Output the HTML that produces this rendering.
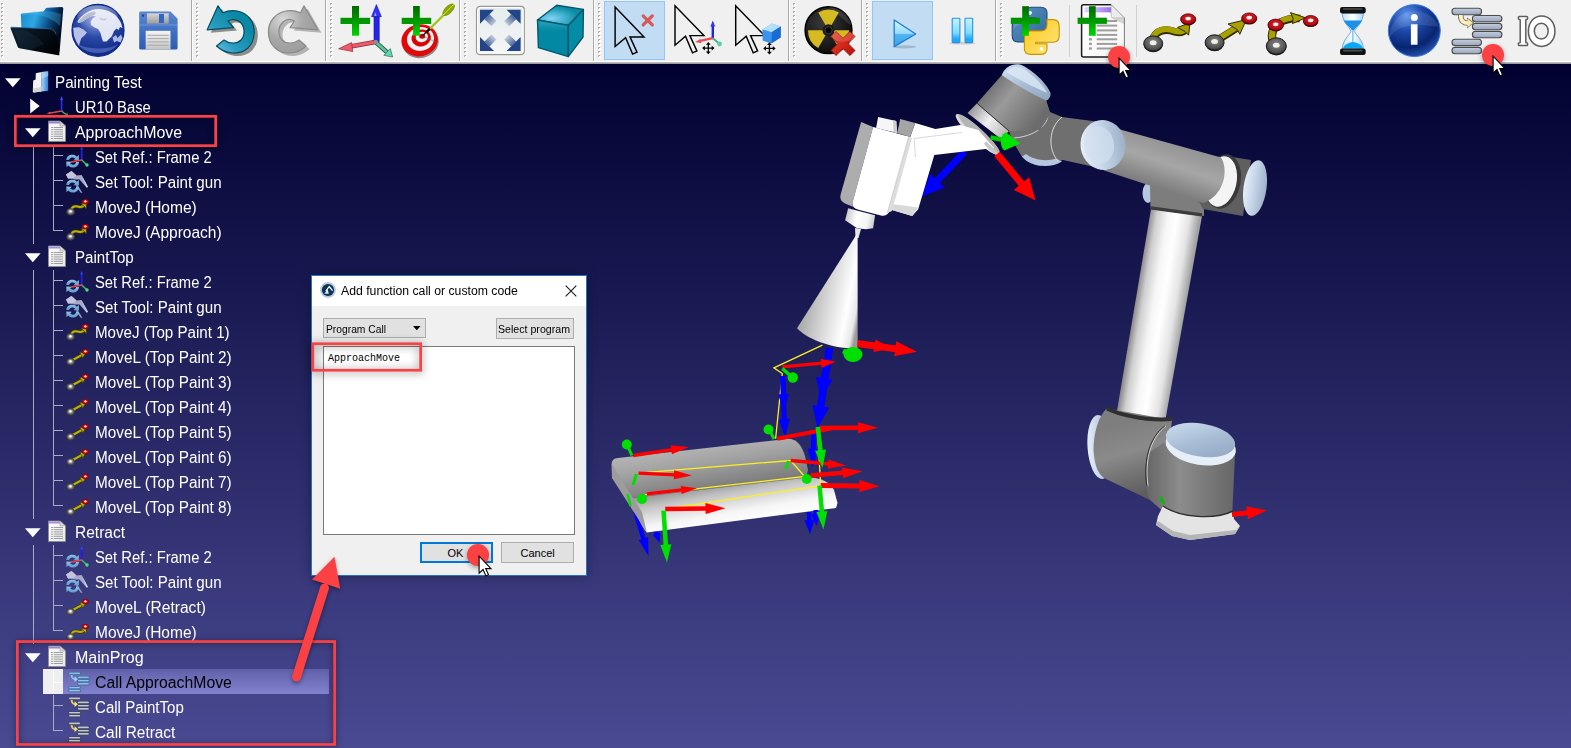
<!DOCTYPE html><html><head><meta charset="utf-8"><title>RoboDK</title><style>
*{box-sizing:border-box;margin:0;padding:0}
html,body{width:1571px;height:748px;overflow:hidden;background:#000032}
body{position:relative;font-family:"Liberation Sans",sans-serif;}
#bg{position:absolute;left:0;top:64px;width:1571px;height:684px;background:linear-gradient(#010131 0%,#4a4a93 100%)}
#tb{position:absolute;left:0;top:0;width:1571px;height:62px;background:#f0f0f0;border-bottom:1px solid #fff}
#tbline{position:absolute;left:0;top:62px;width:1571px;height:2px;background:linear-gradient(#c8c8c8,#8c8c94)}
.sep{position:absolute;top:0;width:2px;height:61px;border-left:1px solid #a8a8a8;border-right:1px solid #fff}
.sep2{position:absolute;top:5px;width:1px;height:52px;background:#d0d0d0}
.hdl{position:absolute;top:3px;width:3px;height:55px;background:repeating-linear-gradient(transparent 0,transparent 1px,#fff 1px,#fff 3px,transparent 3px,transparent 4px) 1px 0/2px 100% no-repeat,repeating-linear-gradient(#b0b0b0 0,#b0b0b0 2px,transparent 2px,transparent 4px) 0 0/2px 100% no-repeat}
.hl{position:absolute;top:1px;height:59px;background:#c2dcf3;border:1px solid #92c6f4}
.ic{position:absolute;overflow:visible}
.t{position:absolute;color:#fff;font-size:16px;line-height:25px;height:25px;white-space:pre;transform-origin:0 50%}
.ln{position:absolute;background:#a9a9c4}
.abs{position:absolute}
</style></head><body>
<div id="bg"></div>
<svg class="ic" style="left:0;top:0" width="1571" height="748" viewBox="0 0 1571 748">
<defs>
<linearGradient id="fa" gradientUnits="userSpaceOnUse" x1="1170" y1="135" x2="1150" y2="195"><stop offset="0" stop-color="#8e8e8e"/><stop offset=".45" stop-color="#a6a6a6"/><stop offset="1" stop-color="#6e6e6e"/></linearGradient>
<linearGradient id="ua" gradientUnits="userSpaceOnUse" x1="1131" y1="330" x2="1180" y2="338"><stop offset="0" stop-color="#8e8e8e"/><stop offset=".14" stop-color="#cfcfcf"/><stop offset=".36" stop-color="#f6f6f6"/><stop offset=".55" stop-color="#ffffff"/><stop offset=".8" stop-color="#e4e4e4"/><stop offset="1" stop-color="#a2a2a2"/></linearGradient>
<linearGradient id="cone" gradientUnits="userSpaceOnUse" x1="800" y1="300" x2="860" y2="312"><stop offset="0" stop-color="#a2a2a2"/><stop offset=".45" stop-color="#d8d8d8"/><stop offset=".78" stop-color="#ffffff"/><stop offset=".93" stop-color="#e8e8e8"/><stop offset="1" stop-color="#9a9a9a"/></linearGradient>
<linearGradient id="cap" x1="0" y1="0" x2="1" y2="1"><stop offset="0" stop-color="#cfe0f2"/><stop offset=".5" stop-color="#a9bed6"/><stop offset="1" stop-color="#8ea3bc"/></linearGradient>
<linearGradient id="cap2" x1="0" y1="0" x2="1" y2="0"><stop offset="0" stop-color="#e6effa"/><stop offset=".5" stop-color="#c2d2e6"/><stop offset="1" stop-color="#9cb0c8"/></linearGradient>
<linearGradient id="w3" gradientUnits="userSpaceOnUse" x1="985" y1="85" x2="1035" y2="125"><stop offset="0" stop-color="#6a6a6a"/><stop offset=".4" stop-color="#9a9a9a"/><stop offset="1" stop-color="#6c6c6c"/></linearGradient>
<linearGradient id="w3r" gradientUnits="userSpaceOnUse" x1="972" y1="108" x2="1005" y2="134"><stop offset="0" stop-color="#9a9a9a"/><stop offset=".5" stop-color="#f2f2f2"/><stop offset="1" stop-color="#b8b8b8"/></linearGradient>
<linearGradient id="sh" gradientUnits="userSpaceOnUse" x1="1100" y1="430" x2="1120" y2="500"><stop offset="0" stop-color="#7e7e7e"/><stop offset=".4" stop-color="#8a8a8a"/><stop offset="1" stop-color="#5e5e5e"/></linearGradient>
<linearGradient id="bs" gradientUnits="userSpaceOnUse" x1="1150" y1="480" x2="1235" y2="480"><stop offset="0" stop-color="#6a6a6a"/><stop offset=".35" stop-color="#8c8c8c"/><stop offset="1" stop-color="#666"/></linearGradient>
<linearGradient id="wpU" gradientUnits="userSpaceOnUse" x1="700" y1="440" x2="708" y2="490"><stop offset="0" stop-color="#b9b9b9"/><stop offset=".45" stop-color="#a2a2a2"/><stop offset="1" stop-color="#7c7c7c"/></linearGradient>
<linearGradient id="wpL" gradientUnits="userSpaceOnUse" x1="735" y1="478" x2="743" y2="525"><stop offset="0" stop-color="#8a8a8a"/><stop offset=".3" stop-color="#c4c4c4"/><stop offset=".7" stop-color="#f6f6f6"/><stop offset="1" stop-color="#ffffff"/></linearGradient>
<linearGradient id="gunS" gradientUnits="userSpaceOnUse" x1="850" y1="160" x2="905" y2="175"><stop offset="0" stop-color="#f4f4f4"/><stop offset=".3" stop-color="#ffffff"/><stop offset="1" stop-color="#ffffff"/></linearGradient>
<linearGradient id="noz" gradientUnits="userSpaceOnUse" x1="846" y1="215" x2="875" y2="222"><stop offset="0" stop-color="#c6c6c6"/><stop offset=".35" stop-color="#fff"/><stop offset=".75" stop-color="#f4f4f4"/><stop offset="1" stop-color="#c4c4c4"/></linearGradient>
</defs>
<path d="M964.5 152.0 L936.5 181.3" stroke="#0000ff" stroke-width="7" stroke-linecap="butt"/><path d="M922.0 196.5 L930.0 173.7 L944.4 187.5 Z" fill="#0000ff"/>
<path d="M1151 209 L1202 216 L1164.800 423 L1116.800 412 Z" fill="url(#ua)"/>
<ellipse cx="1148" cy="193" rx="5.500" ry="10" fill="#b5c8e0"/>
<path d="M1150 186 C1160 178 1180 176 1204 190 L1204 216 L1150.500 208.500 Z" fill="#7d7d7d"/>
<path d="M1150.800 206.300 L1202.200 213.300 L1201.800 216.500 L1150.400 209.500 Z" fill="#3c3c3c"/>
<path d="M1226 156 L1251 160 L1243 216 L1203 209 L1196 196 L1215 160 Z" fill="#5f5f5f"/>
<ellipse cx="1223" cy="181.500" rx="17.500" ry="27.500" transform="rotate(12 1223 181.500)" fill="#3a3a3a"/>
<ellipse cx="1221" cy="181.500" rx="15.500" ry="25.500" transform="rotate(12 1221 181.500)" fill="#f4f4f4"/>
<ellipse cx="1255" cy="188" rx="11.500" ry="28" transform="rotate(8 1255 188)" fill="url(#cap2)"/>
<path d="M1100 124 L1122 130 L1221 157.500 C1229 170 1224 196 1203 203 L1104 170.500 Z" fill="url(#fa)"/>
<path d="M1046 100 L1050 112 L1062 117 L1100 122 L1112 170 L1090 166 L1063 160 L1040 166 L1022 157 L1012 140 L1009 131 Z" fill="#6f6f6f"/>
<path d="M1022 156.500 C1030 167 1050 169 1062 161.500 L1056 158.500 C1046 162 1034 160 1026 154 Z" fill="#b4c6de"/>
<path d="M1062 117 C1048 128 1048 150 1058 161" fill="none" stroke="#d8d8d8" stroke-width="1"/>
<path d="M1047 108 C1052 120 1040 136 1014 138" fill="none" stroke="#d0d0d0" stroke-width="1"/>
<ellipse cx="1103" cy="145" rx="22.500" ry="25" transform="rotate(-8 1103 145)" fill="url(#cap2)"/>
<ellipse cx="1099" cy="145" rx="15" ry="19" transform="rotate(-8 1099 145)" fill="#d2e0f0" opacity=".7"/>
<path d="M1001.700 75.200 L1046 100 L1050 114 L1040 130 L1009 131 L977 103.300 Z" fill="url(#w3)"/>
<path d="M1001.700 75.200 C1004 68 1012 63 1020 64.500 C1030 68 1046 82 1050.500 93 C1051 97 1048 100 1046 100.500 C1030 93 1012 82 1001.700 75.200 Z" fill="url(#cap)"/>
<path d="M1006 72 C1012 66 1018 66 1024 69 C1034 76 1044 86 1047 93 C1032 86 1016 78 1006 72 Z" fill="#dce8f6" opacity=".8"/>
<path d="M977 103.300 L1009 131 L1001 139 L967.500 113 Z" fill="url(#w3r)"/>
<path d="M977 103.300 L1009 131" stroke="#2e2e2e" stroke-width="1"/>
<ellipse cx="977.700" cy="134.600" rx="29.500" ry="6" transform="rotate(42.800 977.700 134.600)" fill="#dcdcdc"/>
<ellipse cx="979" cy="133.600" rx="28" ry="4.400" transform="rotate(42.800 979 133.600)" fill="#b4b4b4"/>
<path d="M915.200 123 L935.300 129.100 L960.300 125.100 L978.300 130.100 L994 148 L934.300 155.100 L918.200 209.200 L912.200 215.900 L891.200 209.800 L910.200 137.100 Z" fill="#ffffff"/>
<path d="M892 204 L918.600 207.600 L912.200 215.900 L891.200 209.800 Z" fill="#d9d9d9"/>
<path d="M914 138.500 L962 132.500 M914 138.500 L915.500 157" fill="none" stroke="#cfcfcf" stroke-width=".8"/>
<path d="M986 141 C992 147 998 152 1000 156 C996 156 990 151 984 144 Z" fill="#c8c8c8"/>
<path d="M861.100 122 L873.100 127.100 L852.800 201.500 Q852 205 853.500 207 L845 203.500 Q839 200 840.500 195 Z" fill="#adadad"/>
<path d="M878.100 117 L896.200 121 L897.200 133 L876.100 128 Z" fill="#f6f6f6"/><path d="M893 120.300 L896.200 121 L897.200 133 L893.500 132.200 Z" fill="#cfcfcf"/>
<path d="M900.200 119 L915.200 123 L910.200 137.100 L897.200 133.100 Z" fill="#a4a4a4"/>
<path d="M905 136 L912 138 L892 211 L885 214 Z" fill="#dcdcdc"/>
<path d="M873.100 127.100 L910.200 137.100 L890 208.500 Q888.500 217 881 215.500 L858.500 209.800 Q851 207.500 852.800 201.500 Z" fill="url(#gunS)"/>
<path d="M908 137 L910.200 137.100 L889 212 L886.500 214 Z" fill="#d5d5d5"/>
<path d="M848.100 208.200 L875.100 215.300 L873.100 228.300 L866 229.300 L857.100 228.300 L845.100 220.300 Z" fill="url(#noz)"/>
<path d="M855 228 L861 229 L858.500 238 L855.500 238 Z" fill="#e4e4e4"/>
<path d="M856.200 235 L797 328.300 C806 338 830 349 857.600 348.500 L857.600 236 Z" fill="url(#cone)"/>
<path d="M997.0 154.0 L1022.1 184.3" stroke="#ff0000" stroke-width="7" stroke-linecap="butt"/><path d="M1035.5 200.5 L1013.8 189.9 L1029.2 177.2 Z" fill="#ff0000"/>
<path d="M990.500 137.500 L1004 140" stroke="#00cc00" stroke-width="4.500"/>
<path d="M1020.300 143.500 L1006 132.300 C1000 134 999 147 1004.500 150.600 Z" fill="#00e400"/>
<ellipse cx="1100" cy="447" rx="12.500" ry="32" transform="rotate(-4 1100 447)" fill="url(#cap2)"/>
<path d="M1107 408.500 C1098 416 1093 436 1093.700 452 C1094.500 466 1099 476 1106 479 L1150 500 L1166 470 L1172 420 Z" fill="url(#sh)"/>
<path d="M1107 406.500 C1122 414 1150 419 1172 417 L1171.600 421 C1150 423 1122 418 1106.400 410.500 Z" fill="#303030"/>
<path d="M1150 452 C1144 470 1145 490 1150 500 L1166 514 L1232 518 L1235 455 L1180 432 Z" fill="url(#bs)"/>
<path d="M1166 426 C1152 436 1144 458 1148 486" fill="none" stroke="#d6d6d6" stroke-width="1"/>
<path d="M1166 426 C1152 436 1144 458 1148 486" fill="none" stroke="#2c2c2c" stroke-width="1" transform="translate(-1.200 0)"/>
<ellipse cx="1200.800" cy="446.500" rx="35.500" ry="18.500" transform="rotate(9 1200.800 446.500)" fill="#e6eef8"/>
<ellipse cx="1200.500" cy="440" rx="35" ry="16.500" transform="rotate(9 1200.500 440)" fill="url(#cap)"/>
<path d="M1163 506 C1180 518 1215 520 1233 511 L1234 519 L1240 526 L1235 534 L1190 540 L1172 536 L1156 525 L1158 516 Z" fill="#e4e4e4"/>
<path d="M1163 506 C1180 518 1215 520 1233 511" fill="none" stroke="#2e2e2e" stroke-width="1.400"/>
<path d="M1156 525 L1172 536 L1190 540 L1235 534 L1240 526 L1236 530 L1190 535 L1173 531 L1158 521 Z" fill="#b5b5b5"/>
<path d="M1232.0 514.5 L1248.1 512.7" stroke="#ff0000" stroke-width="5" stroke-linecap="butt"/><path d="M1267.0 510.5 L1247.9 519.2 L1246.4 506.3 Z" fill="#ff0000"/>
<path d="M1160.500 496 L1164 503 L1161 502 Z" fill="#00c000" stroke="#00c000" stroke-width="1.500"/>
<path d="M635.0 510.0 L643.7 539.7" stroke="#0000ff" stroke-width="4.5" stroke-linecap="butt"/><path d="M648.5 556.0 L638.6 540.1 L648.2 537.3 Z" fill="#0000ff"/>
<path d="M655.0 530.0 L656.8 534.6" stroke="#0000ff" stroke-width="4" stroke-linecap="butt"/><path d="M660.0 543.0 L652.7 535.1 L660.1 532.2 Z" fill="#0000ff"/>
<path d="M611.700 464 C611.700 460 614 458.500 618 458 L789 438.700 C797 439 802 446 805 456 L808 470 L806 478 L631 498 L612 478 Z" fill="url(#wpU)"/>
<path d="M631.500 498 L808 477.500 C820 477 830 482 834 490 L837.500 503 L836 508 L646.800 532.400 C640 524 634 510 631.500 498 Z" fill="url(#wpL)"/>
<path d="M611.700 464 L612 478 L646.800 532.400 L642 512 L628 490 Z" fill="#9c9c9c"/>
<g stroke="#ffee20" stroke-width="1.300" fill="none"><path d="M822.400 345.100 L773.900 367.800 L782.300 373.500 L775.600 438.700"/><path d="M638.500 473.200 L790.600 460.500 L804.700 476.500 L645.200 494.600"/><path d="M665.200 509 L820.700 485.600 L817.400 427"/></g>
<path d="M829.5 348.0 L820.6 407.2" stroke="#0000ff" stroke-width="7.5" stroke-linecap="butt"/><path d="M817.5 428.0 L812.4 405.0 L829.2 407.5 Z" fill="#0000ff"/>
<path d="M825.5 372.0 L824.1 379.3" stroke="#0000ff" stroke-width="7" stroke-linecap="butt"/><path d="M820.5 398.0 L815.9 376.8 L832.6 380.0 Z" fill="#0000ff"/>
<path d="M782.5 376.0 L784.3 420.0" stroke="#0000ff" stroke-width="5" stroke-linecap="butt"/><path d="M785.0 437.0 L778.8 419.2 L789.8 418.8 Z" fill="#0000ff"/>
<path d="M783.0 376.0 L783.5 395.0" stroke="#0000ff" stroke-width="5" stroke-linecap="butt"/><path d="M784.0 412.0 L778.0 394.2 L789.0 393.9 Z" fill="#0000ff"/>
<path d="M814.0 430.0 L813.2 450.0" stroke="#0000ff" stroke-width="5" stroke-linecap="butt"/><path d="M812.5 467.0 L807.7 448.8 L818.7 449.2 Z" fill="#0000ff"/>
<path d="M809.0 512.0 L809.4 521.0" stroke="#0000ff" stroke-width="4.5" stroke-linecap="butt"/><path d="M810.0 534.0 L804.4 520.2 L814.4 519.8 Z" fill="#0000ff"/>
<path d="M815.5 510.0 L815.8 515.0" stroke="#0000ff" stroke-width="4.5" stroke-linecap="butt"/><path d="M816.5 526.0 L811.3 514.3 L820.2 513.7 Z" fill="#0000ff"/>
<path d="M857.5 343.5 L896.2 348.9" stroke="#ff0000" stroke-width="7" stroke-linecap="butt"/><path d="M917.0 351.8 L894.2 356.2 L896.2 341.3 Z" fill="#ff0000"/><path d="M891.9 348.3 L873.6 352.1 L875.4 339.6 Z" fill="#ff0000"/>
<path d="M782.3 366.8 L822.1 363.1" stroke="#ff0000" stroke-width="3.3" stroke-linecap="butt"/><path d="M836.0 361.8 L821.5 367.7 L820.6 358.7 Z" fill="#ff0000"/>
<path d="M777.300 438.700 L831 428.500" stroke="#ff0000" stroke-width="4"/>
<path d="M820.0 428.0 L859.0 427.8" stroke="#ff0000" stroke-width="4.5" stroke-linecap="butt"/><path d="M878.0 427.7 L858.0 433.3 L858.0 422.3 Z" fill="#ff0000"/>
<path d="M633.4 455.5 L672.2 449.6" stroke="#ff0000" stroke-width="3.3" stroke-linecap="butt"/><path d="M689.0 447.1 L671.9 454.2 L670.5 445.3 Z" fill="#ff0000"/>
<path d="M638.5 473.2 L675.0 474.8" stroke="#ff0000" stroke-width="3.3" stroke-linecap="butt"/><path d="M692.0 475.5 L673.8 479.2 L674.2 470.2 Z" fill="#ff0000"/>
<path d="M646.8 493.9 L682.1 489.9" stroke="#ff0000" stroke-width="3.3" stroke-linecap="butt"/><path d="M697.0 488.2 L681.6 494.0 L680.7 486.0 Z" fill="#ff0000"/>
<path d="M665.2 509.0 L706.5 508.5" stroke="#ff0000" stroke-width="4.5" stroke-linecap="butt"/><path d="M725.5 508.3 L705.6 514.0 L705.4 503.0 Z" fill="#ff0000"/>
<path d="M790.6 460.5 L829.1 464.0" stroke="#ff0000" stroke-width="3.3" stroke-linecap="butt"/><path d="M846.0 465.5 L827.7 468.4 L828.5 459.4 Z" fill="#ff0000"/>
<path d="M810.7 475.5 L843.6 472.8" stroke="#ff0000" stroke-width="4.5" stroke-linecap="butt"/><path d="M862.5 471.2 L843.0 478.3 L842.1 467.4 Z" fill="#ff0000"/>
<path d="M820.7 485.6 L860.5 486.0" stroke="#ff0000" stroke-width="5" stroke-linecap="butt"/><path d="M879.5 486.2 L859.4 492.0 L859.6 480.0 Z" fill="#ff0000"/>
<path d="M817.8 427.0 L820.6 451.1" stroke="#00e000" stroke-width="4.5" stroke-linecap="butt"/><path d="M822.6 468.0 L815.0 450.8 L826.0 449.5 Z" fill="#00e000"/>
<path d="M819.5 485.6 L822.0 512.6" stroke="#00e000" stroke-width="4.5" stroke-linecap="butt"/><path d="M823.5 529.5 L816.4 512.1 L827.3 511.1 Z" fill="#00e000"/>
<path d="M663.5 510.6 L665.9 545.5" stroke="#00e000" stroke-width="4.5" stroke-linecap="butt"/><path d="M667.0 562.5 L660.3 544.9 L671.3 544.2 Z" fill="#00e000"/>
<g fill="#00e000" stroke="#00e000"><path d="M626.800 443.700 L631.800 455.500" stroke-width="3"/><circle cx="626.800" cy="444.500" r="5" stroke="none"/><path d="M768.900 428.700 L774 439" stroke-width="3"/><circle cx="768.500" cy="429.500" r="5" stroke="none"/><path d="M782.300 368.500 L792 377" stroke-width="3.500"/><circle cx="792.800" cy="377.500" r="5.200" stroke="none"/><ellipse cx="853" cy="354.500" rx="9.500" ry="7.500" stroke="none"/><path d="M843 351 L850 354" stroke-width="5"/><circle cx="642" cy="499" r="5" stroke="none"/><circle cx="806.700" cy="479" r="5" stroke="none"/><path d="M636.500 474 L633 485" stroke-width="3"/><path d="M788.500 461 L785.500 469" stroke-width="3"/><path d="M627.500 494 L630.500 506" stroke-width="2.500"/></g>
</svg>
<svg width="0" height="0" style="position:absolute"><defs>
<linearGradient id="gDoc" x1="0" y1="0" x2="1" y2="1"><stop offset="0" stop-color="#fff"/><stop offset="1" stop-color="#e8e8e8"/></linearGradient>
<linearGradient id="gRef" x1="0" y1="0" x2="0" y2="1"><stop offset="0" stop-color="#8fc0e6"/><stop offset="1" stop-color="#5b9bd0"/></linearGradient>
<radialGradient id="gGr" cx=".48" cy=".42" r=".6"><stop offset="0" stop-color="#fff"/><stop offset=".22" stop-color="#e8e8e8"/><stop offset=".42" stop-color="#8a8a8a"/><stop offset="1" stop-color="#3a3a3a"/></radialGradient>
<radialGradient id="gRd" cx=".5" cy=".45" r=".6"><stop offset="0" stop-color="#fff"/><stop offset=".3" stop-color="#f0b0b0"/><stop offset=".45" stop-color="#d01010"/><stop offset="1" stop-color="#a00000"/></radialGradient>
<linearGradient id="gSt" x1="0" y1="0" x2="1" y2="0"><stop offset="0" stop-color="#a8d4f4"/><stop offset="1" stop-color="#2f7fdc"/></linearGradient>
<symbol id="sProg" viewBox="0 0 18 22" overflow="visible">
 <path d="M0.5 1 L12 1 L17.5 6 L17.5 21.5 L0.5 21.5 Z" fill="url(#gDoc)" stroke="#8c8c8c" stroke-width=".8"/>
 <path d="M1 1.4 L11.8 1.4 L13.5 3.6 L1 3.6 Z" fill="#a58ee0"/>
 <path d="M12 1 L12 6 L17.5 6 Z" fill="#d8d8d8" stroke="#9a9a9a" stroke-width=".5"/>
 <g stroke="#9c9c9c" stroke-width="1"><path d="M3 7.5H15M3 9.7H15M3 11.9H15M3 14.1H15M3 16.3H15M3 18.5H15"/></g>
 <path d="M5.3 6.5V19.5" stroke="#f4f4f4" stroke-width=".8"/>
</symbol>
<symbol id="sRefresh" viewBox="0 0 14 14" overflow="visible">
 <path d="M0.3 5.8 C0.5 1.8 4 0 7.2 0.4 C9.4 0.7 10.6 1.7 11.2 2.5 L13.2 0.6 L13.4 6.4 L7.6 6.2 L9.4 4.4 C8.4 3.4 6.6 3 5.2 3.6 C4 4.1 3.4 5 3.3 5.8 Z" fill="url(#gRef)"/>
 <path d="M13.4 8 C13.2 12 9.8 14 6.4 13.6 C4.2 13.3 3 12.3 2.4 11.5 L0.5 13.4 L0.3 7.5 L6 7.7 L4.3 9.5 C5.3 10.6 7 11 8.5 10.4 C9.7 9.9 10.3 9 10.4 8 Z" fill="url(#gRef)"/>
</symbol>
<symbol id="sMoveJ" viewBox="0 0 24 16" overflow="visible">
 <path d="M5 10.5 C6 5.5 10 6 13 6.8 C15.5 7.5 17 6.5 18.5 5" fill="none" stroke="#3e3a00" stroke-width="3.4" stroke-linecap="round"/>
 <path d="M5 10.5 C6 5.500 10 6 13 6.800 C15.5 7.5 17 6.5 18.5 5" fill="none" stroke="#b9b010" stroke-width="2.1" stroke-linecap="round"/>
 <path d="M15.2 3.6 L20.6 1.8 L20.2 8.8 L18.3 6.4 Z" fill="#b9b010" stroke="#3e3a00" stroke-width=".7" stroke-linejoin="round"/>
 <ellipse cx="4.6" cy="11.9" rx="3.9" ry="3.3" fill="url(#gGr)" stroke="#3c3c3c" stroke-width=".7"/>
 <ellipse cx="19.4" cy="1.7" rx="3.3" ry="2.4" fill="url(#gRd)" stroke="#800" stroke-width=".5"/>
</symbol>
<symbol id="sMoveL" viewBox="0 0 24 16" overflow="visible">
 <path d="M5 11 L16.5 4.600" fill="none" stroke="#3e3a00" stroke-width="3.4" stroke-linecap="round"/>
 <path d="M5 11 L16.5 4.6" fill="none" stroke="#b9b010" stroke-width="2.1" stroke-linecap="round"/>
 <path d="M13.6 2.6 L20.2 2.2 L16.6 8.2 L15.9 5.600 Z" fill="#b9b010" stroke="#3e3a00" stroke-width=".7" stroke-linejoin="round"/>
 <ellipse cx="4.6" cy="11.9" rx="3.9" ry="3.3" fill="url(#gGr)" stroke="#3c3c3c" stroke-width=".7"/>
 <ellipse cx="19.4" cy="1.7" rx="3.3" ry="2.4" fill="url(#gRd)" stroke="#800" stroke-width=".5"/>
</symbol>
<symbol id="sCallG" viewBox="0 0 22 20" overflow="visible"><rect x="0.3" y="0.2" width="12.6" height="2.700" rx="1.300" fill="#41464f"/><rect x="1.0" y="0.75" width="11.2" height="1.500" rx=".700" fill="#aeb6c6"/><rect x="1.3" y="0.75" width="10.6" height=".700" rx=".300" fill="#cdd3df"/><rect x="9.1" y="4.3" width="12.4" height="2.700" rx="1.300" fill="#41464f"/><rect x="9.799999999999999" y="4.85" width="11.0" height="1.500" rx=".700" fill="#aeb6c6"/><rect x="10.1" y="4.85" width="10.4" height=".700" rx=".300" fill="#cdd3df"/><rect x="9.1" y="7.5" width="12.4" height="2.700" rx="1.300" fill="#41464f"/><rect x="9.799999999999999" y="8.05" width="11.0" height="1.500" rx=".700" fill="#aeb6c6"/><rect x="10.1" y="8.05" width="10.4" height=".700" rx=".300" fill="#cdd3df"/><rect x="9.1" y="10.7" width="12.4" height="2.700" rx="1.300" fill="#41464f"/><rect x="9.799999999999999" y="11.25" width="11.0" height="1.500" rx=".700" fill="#aeb6c6"/><rect x="10.1" y="11.25" width="10.4" height=".700" rx=".300" fill="#cdd3df"/><rect x="0.3" y="14.4" width="12.6" height="2.700" rx="1.300" fill="#41464f"/><rect x="1.0" y="14.950000000000001" width="11.2" height="1.500" rx=".700" fill="#aeb6c6"/><rect x="1.3" y="14.950000000000001" width="10.6" height=".700" rx=".300" fill="#cdd3df"/><rect x="0.3" y="17.5" width="12.6" height="2.700" rx="1.300" fill="#41464f"/><rect x="1.0" y="18.05" width="11.2" height="1.500" rx=".700" fill="#aeb6c6"/><rect x="1.3" y="18.05" width="10.6" height=".700" rx=".300" fill="#cdd3df"/><path d="M3.600 3 C3.600 6.200 5.400 7.400 8 7.300" fill="none" stroke="#ecc850" stroke-width="1.900"/><path d="M6.600 4.300 L9.900 7.200 L6.500 9.900 Z" fill="#f8e27c"/></symbol>
<symbol id="sCallB" viewBox="0 0 22 20" overflow="visible"><rect x="0.3" y="0.2" width="12.6" height="2.700" rx="1.300" fill="#3a6c9e"/><rect x="1.0" y="0.75" width="11.2" height="1.500" rx=".700" fill="#76acd8"/><rect x="1.3" y="0.75" width="10.6" height=".700" rx=".300" fill="#9ccaea"/><rect x="9.1" y="4.3" width="12.4" height="2.700" rx="1.300" fill="#3a6c9e"/><rect x="9.799999999999999" y="4.85" width="11.0" height="1.500" rx=".700" fill="#76acd8"/><rect x="10.1" y="4.85" width="10.4" height=".700" rx=".300" fill="#9ccaea"/><rect x="9.1" y="7.5" width="12.4" height="2.700" rx="1.300" fill="#3a6c9e"/><rect x="9.799999999999999" y="8.05" width="11.0" height="1.500" rx=".700" fill="#76acd8"/><rect x="10.1" y="8.05" width="10.4" height=".700" rx=".300" fill="#9ccaea"/><rect x="9.1" y="10.7" width="12.4" height="2.700" rx="1.300" fill="#3a6c9e"/><rect x="9.799999999999999" y="11.25" width="11.0" height="1.500" rx=".700" fill="#76acd8"/><rect x="10.1" y="11.25" width="10.4" height=".700" rx=".300" fill="#9ccaea"/><rect x="0.3" y="14.4" width="12.6" height="2.700" rx="1.300" fill="#3a6c9e"/><rect x="1.0" y="14.950000000000001" width="11.2" height="1.500" rx=".700" fill="#76acd8"/><rect x="1.3" y="14.950000000000001" width="10.6" height=".700" rx=".300" fill="#9ccaea"/><rect x="0.3" y="17.5" width="12.6" height="2.700" rx="1.300" fill="#3a6c9e"/><rect x="1.0" y="18.05" width="11.2" height="1.500" rx=".700" fill="#76acd8"/><rect x="1.3" y="18.05" width="10.6" height=".700" rx=".300" fill="#9ccaea"/><path d="M3.600 3 C3.600 6.200 5.400 7.400 8 7.300" fill="none" stroke="#86c0e4" stroke-width="1.900"/><path d="M6.600 4.300 L9.900 7.200 L6.500 9.900 Z" fill="#a2d4f0"/></symbol>
</defs></svg>
<div class="abs" style="left:63px;top:669px;width:265.800px;height:25px;background:linear-gradient(#6060aa,#8282cf)"></div>
<div class="abs" style="left:43px;top:669px;width:20px;height:25px;background:#efefef"></div>
<div class="abs" style="left:52.500px;top:669px;width:1px;height:25px;background:#fafafa"></div><div class="abs" style="left:53px;top:681.5px;width:10px;height:1px;background:#fafafa"></div>
<div class="ln" style="left:52.5px;top:144.5px;width:1px;height:86.5px"></div>
<div class="ln" style="left:53px;top:155px;width:9.5px;height:1px"></div>
<div class="ln" style="left:53px;top:180px;width:9.5px;height:1px"></div>
<div class="ln" style="left:53px;top:205px;width:9.5px;height:1px"></div>
<div class="ln" style="left:53px;top:230px;width:9.5px;height:1px"></div>
<div class="ln" style="left:32.5px;top:144.5px;width:1px;height:99.5px"></div>
<div class="ln" style="left:52.5px;top:269.5px;width:1px;height:236.5px"></div>
<div class="ln" style="left:53px;top:280px;width:9.5px;height:1px"></div>
<div class="ln" style="left:53px;top:305px;width:9.5px;height:1px"></div>
<div class="ln" style="left:53px;top:330px;width:9.5px;height:1px"></div>
<div class="ln" style="left:53px;top:355px;width:9.5px;height:1px"></div>
<div class="ln" style="left:53px;top:380px;width:9.5px;height:1px"></div>
<div class="ln" style="left:53px;top:405px;width:9.5px;height:1px"></div>
<div class="ln" style="left:53px;top:430px;width:9.5px;height:1px"></div>
<div class="ln" style="left:53px;top:455px;width:9.5px;height:1px"></div>
<div class="ln" style="left:53px;top:480px;width:9.5px;height:1px"></div>
<div class="ln" style="left:53px;top:505px;width:9.5px;height:1px"></div>
<div class="ln" style="left:32.5px;top:269.5px;width:1px;height:249.5px"></div>
<div class="ln" style="left:52.5px;top:544.5px;width:1px;height:86.5px"></div>
<div class="ln" style="left:53px;top:555px;width:9.5px;height:1px"></div>
<div class="ln" style="left:53px;top:580px;width:9.5px;height:1px"></div>
<div class="ln" style="left:53px;top:605px;width:9.5px;height:1px"></div>
<div class="ln" style="left:53px;top:630px;width:9.5px;height:1px"></div>
<div class="ln" style="left:32.5px;top:544.5px;width:1px;height:99.5px"></div>
<div class="ln" style="left:52.5px;top:694.5px;width:1px;height:36.5px"></div>
<div class="ln" style="left:53px;top:705px;width:9.5px;height:1px"></div>
<div class="ln" style="left:53px;top:730px;width:9.5px;height:1px"></div>
<svg class="ic" style="left:5.2px;top:77.7px" width="16" height="10" viewBox="0 0 16 10"><path d="M0 0.300 L15.6 0.300 L7.800 9.300 Z" fill="#fff"/></svg>
<svg class="ic" style="left:32px;top:70px" width="18" height="24" viewBox="0 0 18 24"><path d="M1.2 10.500 L3.6 9.4 L3.8 3.2 L9.6 2 L9.6 21.5 L2 22.600 Q.6 22.500 .8 21 Z" fill="#f2f2f2"/><path d="M2 22.6 L9.6 21.5 L9.600 17 L1 18.5 Z" fill="#d4d4d4"/><path d="M9.6 2 L16.200 1.2 L16.2 20.800 L9.6 21.500 Z" fill="url(#gSt)"/><path d="M9.6 2 L16.2 1.2 L16.2 6 L9.6 9 Z" fill="#b8dcf6" opacity=".6"/></svg>
<div class="t" style="left:54.7px;top:70px;color:#fff;transform:scaleX(0.9504)">Painting Test</div>
<svg class="ic" style="left:29.7px;top:98px" width="10" height="16" viewBox="0 0 10 16"><path d="M0.200 0.400 L9.700 8 L0.200 15.400 Z" fill="#fff"/></svg>
<svg class="ic" style="left:46px;top:93px" width="24" height="24" viewBox="0 0 24 24"><path d="M15.600 18 L15.600 6" stroke="#2a2af6" stroke-width="1.700"/><path d="M15.600 3 L17 7 L14.200 7 Z" fill="#4a4aff"/><path d="M15.600 18 L3 20.200" stroke="#f04854" stroke-width="1.600"/><path d="M.5 20.600 L4.200 18.800 L4.600 21 Z" fill="#f05058"/><path d="M15.600 18 L19 20.800 L22 21.400" stroke="#40b870" stroke-width="1.500" fill="none"/></svg>
<div class="t" style="left:74.7px;top:95px;color:#fff;transform:scaleX(0.9263)">UR10 Base</div>
<svg class="ic" style="left:25.2px;top:127.69999999999999px" width="16" height="10" viewBox="0 0 16 10"><path d="M0 0.300 L15.6 0.300 L7.800 9.300 Z" fill="#fff"/></svg>
<svg class="ic" style="left:48.2px;top:120px" width="18" height="22"><use href="#sProg" width="18" height="22"/></svg>
<div class="t" style="left:74.7px;top:120px;color:#fff;transform:scaleX(0.9950)">ApproachMove</div>
<svg class="ic" style="left:65.8px;top:153.8px" width="13.6" height="14.2"><use href="#sRefresh" width="13.6" height="14.2"/></svg><svg class="ic" style="left:68px;top:146px" width="22" height="22" viewBox="0 0 22 22"><path d="M13.700 14 L13.700 3" stroke="#2020e8" stroke-width="1.800"/><path d="M13.7 0 L15.200 3.600 L12.2 3.600 Z" fill="#3838ff"/><path d="M13.7 14 L3.500 16" stroke="#f04048" stroke-width="1.700" stroke-linecap="round"/><path d="M13.7 14 L18.600 18.600" stroke="#38b868" stroke-width="1.500"/><circle cx="19" cy="19" r="1.700" fill="#48d888"/></svg>
<div class="t" style="left:94.7px;top:145px;color:#fff;transform:scaleX(0.9242)">Set Ref.: Frame 2</div>
<svg class="ic" style="left:65px;top:170px" width="24" height="24" viewBox="0 0 24 24"><path d="M1 4.5 L6.500 1 L11.500 5.500 L16.500 5 L23 17 L21.500 17.500 L14.500 9.500 L9 9.500 L8 8.500 L3 8.500 Z" fill="#a8a8cc"/><path d="M1 4.500 L6.5 1 L11.5 5.500 L8 8.500 L3 8.500 Z" fill="#c4c4de"/><path d="M16.5 5 L23 17 L21.5 17.5 Z" fill="#d0d0e8"/><path d="M12 14 L17.500 23 L15.500 22.500 L11 16 Z" fill="#9c9cc4"/></svg><svg class="ic" style="left:65.8px;top:178.7px" width="13.6" height="14.2"><use href="#sRefresh" width="13.6" height="14.2"/></svg>
<div class="t" style="left:94.7px;top:170px;color:#fff;transform:scaleX(0.9445)">Set Tool: Paint gun</div>
<svg class="ic" style="left:65.8px;top:199.8px" width="24" height="16"><use href="#sMoveJ" width="24" height="16"/></svg>
<div class="t" style="left:94.7px;top:195px;color:#fff;transform:scaleX(0.9693)">MoveJ (Home)</div>
<svg class="ic" style="left:65.8px;top:224.8px" width="24" height="16"><use href="#sMoveJ" width="24" height="16"/></svg>
<div class="t" style="left:94.7px;top:220px;color:#fff;transform:scaleX(0.9684)">MoveJ (Approach)</div>
<svg class="ic" style="left:25.2px;top:252.7px" width="16" height="10" viewBox="0 0 16 10"><path d="M0 0.300 L15.6 0.300 L7.800 9.300 Z" fill="#fff"/></svg>
<svg class="ic" style="left:48.2px;top:245px" width="18" height="22"><use href="#sProg" width="18" height="22"/></svg>
<div class="t" style="left:74.7px;top:245px;color:#fff;transform:scaleX(0.9426)">PaintTop</div>
<svg class="ic" style="left:65.8px;top:278.8px" width="13.6" height="14.2"><use href="#sRefresh" width="13.6" height="14.2"/></svg><svg class="ic" style="left:68px;top:271px" width="22" height="22" viewBox="0 0 22 22"><path d="M13.700 14 L13.700 3" stroke="#2020e8" stroke-width="1.800"/><path d="M13.7 0 L15.200 3.600 L12.2 3.600 Z" fill="#3838ff"/><path d="M13.7 14 L3.500 16" stroke="#f04048" stroke-width="1.700" stroke-linecap="round"/><path d="M13.7 14 L18.600 18.600" stroke="#38b868" stroke-width="1.500"/><circle cx="19" cy="19" r="1.700" fill="#48d888"/></svg>
<div class="t" style="left:94.7px;top:270px;color:#fff;transform:scaleX(0.9242)">Set Ref.: Frame 2</div>
<svg class="ic" style="left:65px;top:295px" width="24" height="24" viewBox="0 0 24 24"><path d="M1 4.5 L6.500 1 L11.500 5.500 L16.500 5 L23 17 L21.500 17.500 L14.500 9.500 L9 9.500 L8 8.500 L3 8.500 Z" fill="#a8a8cc"/><path d="M1 4.500 L6.5 1 L11.5 5.500 L8 8.500 L3 8.500 Z" fill="#c4c4de"/><path d="M16.5 5 L23 17 L21.5 17.5 Z" fill="#d0d0e8"/><path d="M12 14 L17.500 23 L15.500 22.500 L11 16 Z" fill="#9c9cc4"/></svg><svg class="ic" style="left:65.8px;top:303.7px" width="13.6" height="14.2"><use href="#sRefresh" width="13.6" height="14.2"/></svg>
<div class="t" style="left:94.7px;top:295px;color:#fff;transform:scaleX(0.9445)">Set Tool: Paint gun</div>
<svg class="ic" style="left:65.8px;top:324.8px" width="24" height="16"><use href="#sMoveJ" width="24" height="16"/></svg>
<div class="t" style="left:94.7px;top:320px;color:#fff;transform:scaleX(0.9460)">MoveJ (Top Paint 1)</div>
<svg class="ic" style="left:65.8px;top:349.8px" width="24" height="16"><use href="#sMoveL" width="24" height="16"/></svg>
<div class="t" style="left:94.7px;top:345px;color:#fff;transform:scaleX(0.9579)">MoveL (Top Paint 2)</div>
<svg class="ic" style="left:65.8px;top:374.8px" width="24" height="16"><use href="#sMoveL" width="24" height="16"/></svg>
<div class="t" style="left:94.7px;top:370px;color:#fff;transform:scaleX(0.9579)">MoveL (Top Paint 3)</div>
<svg class="ic" style="left:65.8px;top:399.8px" width="24" height="16"><use href="#sMoveL" width="24" height="16"/></svg>
<div class="t" style="left:94.7px;top:395px;color:#fff;transform:scaleX(0.9579)">MoveL (Top Paint 4)</div>
<svg class="ic" style="left:65.8px;top:424.8px" width="24" height="16"><use href="#sMoveL" width="24" height="16"/></svg>
<div class="t" style="left:94.7px;top:420px;color:#fff;transform:scaleX(0.9579)">MoveL (Top Paint 5)</div>
<svg class="ic" style="left:65.8px;top:449.8px" width="24" height="16"><use href="#sMoveL" width="24" height="16"/></svg>
<div class="t" style="left:94.7px;top:445px;color:#fff;transform:scaleX(0.9579)">MoveL (Top Paint 6)</div>
<svg class="ic" style="left:65.8px;top:474.8px" width="24" height="16"><use href="#sMoveL" width="24" height="16"/></svg>
<div class="t" style="left:94.7px;top:470px;color:#fff;transform:scaleX(0.9579)">MoveL (Top Paint 7)</div>
<svg class="ic" style="left:65.8px;top:499.8px" width="24" height="16"><use href="#sMoveL" width="24" height="16"/></svg>
<div class="t" style="left:94.7px;top:495px;color:#fff;transform:scaleX(0.9579)">MoveL (Top Paint 8)</div>
<svg class="ic" style="left:25.2px;top:527.7px" width="16" height="10" viewBox="0 0 16 10"><path d="M0 0.300 L15.6 0.300 L7.800 9.300 Z" fill="#fff"/></svg>
<svg class="ic" style="left:48.2px;top:520px" width="18" height="22"><use href="#sProg" width="18" height="22"/></svg>
<div class="t" style="left:74.7px;top:520px;color:#fff;transform:scaleX(0.9712)">Retract</div>
<svg class="ic" style="left:65.8px;top:553.8px" width="13.6" height="14.2"><use href="#sRefresh" width="13.6" height="14.2"/></svg><svg class="ic" style="left:68px;top:546px" width="22" height="22" viewBox="0 0 22 22"><path d="M13.700 14 L13.700 3" stroke="#2020e8" stroke-width="1.800"/><path d="M13.7 0 L15.200 3.600 L12.2 3.600 Z" fill="#3838ff"/><path d="M13.7 14 L3.500 16" stroke="#f04048" stroke-width="1.700" stroke-linecap="round"/><path d="M13.7 14 L18.600 18.600" stroke="#38b868" stroke-width="1.500"/><circle cx="19" cy="19" r="1.700" fill="#48d888"/></svg>
<div class="t" style="left:94.7px;top:545px;color:#fff;transform:scaleX(0.9242)">Set Ref.: Frame 2</div>
<svg class="ic" style="left:65px;top:570px" width="24" height="24" viewBox="0 0 24 24"><path d="M1 4.5 L6.500 1 L11.500 5.500 L16.500 5 L23 17 L21.500 17.500 L14.500 9.500 L9 9.500 L8 8.500 L3 8.500 Z" fill="#a8a8cc"/><path d="M1 4.500 L6.5 1 L11.5 5.500 L8 8.500 L3 8.500 Z" fill="#c4c4de"/><path d="M16.5 5 L23 17 L21.5 17.5 Z" fill="#d0d0e8"/><path d="M12 14 L17.500 23 L15.500 22.500 L11 16 Z" fill="#9c9cc4"/></svg><svg class="ic" style="left:65.8px;top:578.7px" width="13.6" height="14.2"><use href="#sRefresh" width="13.6" height="14.2"/></svg>
<div class="t" style="left:94.7px;top:570px;color:#fff;transform:scaleX(0.9445)">Set Tool: Paint gun</div>
<svg class="ic" style="left:65.8px;top:599.8px" width="24" height="16"><use href="#sMoveL" width="24" height="16"/></svg>
<div class="t" style="left:94.7px;top:595px;color:#fff;transform:scaleX(0.9719)">MoveL (Retract)</div>
<svg class="ic" style="left:65.8px;top:624.8px" width="24" height="16"><use href="#sMoveJ" width="24" height="16"/></svg>
<div class="t" style="left:94.7px;top:620px;color:#fff;transform:scaleX(0.9693)">MoveJ (Home)</div>
<svg class="ic" style="left:25.2px;top:652.7px" width="16" height="10" viewBox="0 0 16 10"><path d="M0 0.300 L15.6 0.300 L7.800 9.300 Z" fill="#fff"/></svg>
<svg class="ic" style="left:48.2px;top:645px" width="18" height="22"><use href="#sProg" width="18" height="22"/></svg>
<div class="t" style="left:74.7px;top:645px;color:#fff;transform:scaleX(1.0018)">MainProg</div>
<svg class="ic" style="left:67.8px;top:671.8px" width="22" height="20"><use href="#sCallB" width="22" height="20"/></svg>
<div class="t" style="left:94.7px;top:670px;color:#000;transform:scaleX(0.9867)">Call ApproachMove</div>
<svg class="ic" style="left:67.8px;top:696.8px" width="22" height="20"><use href="#sCallG" width="22" height="20"/></svg>
<div class="t" style="left:94.7px;top:695px;color:#fff;transform:scaleX(0.9418)">Call PaintTop</div>
<svg class="ic" style="left:67.8px;top:721.8px" width="22" height="20"><use href="#sCallG" width="22" height="20"/></svg>
<div class="t" style="left:94.7px;top:720px;color:#fff;transform:scaleX(0.9607)">Call Retract</div>
<div id="tb"></div><div id="tbline"></div>
<div class="sep" style="left:191px"></div>
<div class="sep" style="left:325px"></div>
<div class="sep" style="left:459px"></div>
<div class="sep" style="left:593px"></div>
<div class="sep" style="left:788px"></div>
<div class="sep" style="left:861px"></div>
<div class="sep" style="left:995px"></div>
<div class="hdl" style="left:1px"></div>
<div class="hdl" style="left:196px"></div>
<div class="hdl" style="left:330px"></div>
<div class="hdl" style="left:464px"></div>
<div class="hdl" style="left:598px"></div>
<div class="hdl" style="left:793px"></div>
<div class="hdl" style="left:866px"></div>
<div class="hdl" style="left:1000px"></div>
<div class="sep2" style="left:1069px"></div>
<div class="sep2" style="left:1136px"></div>
<div class="hl" style="left:604px;width:61px"></div>
<div class="hl" style="left:872px;width:61px"></div><svg class="ic" style="left:0;top:0" width="1571" height="70" viewBox="0 0 1571 70"><defs>
<linearGradient id="tPlus" x1="0" y1="0" x2="0" y2="1"><stop offset="0" stop-color="#006a00"/><stop offset=".45" stop-color="#009400"/><stop offset="1" stop-color="#00d400"/></linearGradient>
<linearGradient id="tPlusH" x1="0" y1="0" x2="0" y2="1"><stop offset="0" stop-color="#009000"/><stop offset="1" stop-color="#009c00"/></linearGradient>
<linearGradient id="tFoldB" x1="0" y1="0" x2="1" y2=".35"><stop offset="0" stop-color="#1a86cc"/><stop offset=".38" stop-color="#2ea8e4"/><stop offset=".62" stop-color="#12609e"/><stop offset=".85" stop-color="#062448"/><stop offset="1" stop-color="#020c1c"/></linearGradient>
<linearGradient id="tFoldF" x1="0" y1="0" x2="1" y2=".6"><stop offset="0" stop-color="#0e2436"/><stop offset=".3" stop-color="#0a1826"/><stop offset="1" stop-color="#000206"/></linearGradient>
<radialGradient id="tGlobe" cx=".45" cy=".3" r=".75"><stop offset="0" stop-color="#8ea2e2"/><stop offset=".45" stop-color="#2a48a6"/><stop offset="1" stop-color="#0c2682"/></radialGradient>
<linearGradient id="tGlobeG" x1="0" y1="0" x2="0" y2="1"><stop offset="0" stop-color="#fff" stop-opacity=".85"/><stop offset="1" stop-color="#fff" stop-opacity=".05"/></linearGradient>
<linearGradient id="tSave" x1="0" y1="0" x2="0" y2="1"><stop offset="0" stop-color="#5a86d2"/><stop offset="1" stop-color="#2c5cb4"/></linearGradient>
<linearGradient id="tMetal" x1="0" y1="0" x2="0" y2="1"><stop offset="0" stop-color="#d6d6d6"/><stop offset="1" stop-color="#9c9c9c"/></linearGradient>
<linearGradient id="tLabel" x1="0" y1="0" x2="0" y2="1"><stop offset="0" stop-color="#f4f4f4"/><stop offset="1" stop-color="#c4c4c4"/></linearGradient>
<linearGradient id="tUndo" x1="0" y1="1" x2="1" y2="0"><stop offset="0" stop-color="#7fd4f6"/><stop offset=".35" stop-color="#2a9cc0"/><stop offset=".7" stop-color="#0a88a4"/><stop offset="1" stop-color="#0a88a4"/></linearGradient>
<radialGradient id="tRedo" cx=".3" cy=".3" r=".8"><stop offset="0" stop-color="#d8d8d8"/><stop offset=".5" stop-color="#a8a8a8"/><stop offset="1" stop-color="#9a9a9a"/></radialGradient>
<linearGradient id="tFit" x1="0" y1="0" x2="0" y2="1"><stop offset="0" stop-color="#e4ecec"/><stop offset="1" stop-color="#f6f6f6"/></linearGradient>
<radialGradient id="tCubeT" cx=".3" cy=".65" r=".6"><stop offset="0" stop-color="#7fd6f8"/><stop offset="1" stop-color="#0a8ca6"/></radialGradient>
<linearGradient id="tCubeF" x1="0" y1="0" x2="0" y2="1"><stop offset="0" stop-color="#2aa2bc"/><stop offset=".3" stop-color="#0288a2"/><stop offset="1" stop-color="#0288a2"/></linearGradient>
<linearGradient id="tPlay" x1="0" y1="0" x2="0" y2="1"><stop offset="0" stop-color="#d4f6ff"/><stop offset=".5" stop-color="#9adcfa"/><stop offset=".55" stop-color="#52b4ee"/><stop offset="1" stop-color="#3aa4e8"/></linearGradient>
<linearGradient id="tPause" x1="0" y1="0" x2="0" y2="1"><stop offset="0" stop-color="#c8f4ff"/><stop offset=".6" stop-color="#7adcfc"/><stop offset=".85" stop-color="#22a8f4"/><stop offset="1" stop-color="#22a8f4"/></linearGradient>
<linearGradient id="tRX" x1="0" y1="0" x2="1" y2="1"><stop offset="0" stop-color="#e84838"/><stop offset=".5" stop-color="#d42a1c"/><stop offset="1" stop-color="#b01008"/></linearGradient>
<radialGradient id="tRad" cx=".4" cy=".35" r=".7"><stop offset="0" stop-color="#3a3a3a"/><stop offset="1" stop-color="#0a0a0a"/></radialGradient>
<linearGradient id="tPyB" x1="0" y1="0" x2="1" y2="1"><stop offset="0" stop-color="#5a92c8"/><stop offset="1" stop-color="#306898"/></linearGradient>
<linearGradient id="tPyY" x1="0" y1="0" x2="1" y2="1"><stop offset="0" stop-color="#ffe680"/><stop offset="1" stop-color="#ffc818"/></linearGradient>
<linearGradient id="tPurp" x1="0" y1="0" x2="1" y2="0"><stop offset="0" stop-color="#e8dcff"/><stop offset="1" stop-color="#9a70f0"/></linearGradient>
<linearGradient id="tDoc" x1="0" y1="0" x2="1" y2="1"><stop offset="0" stop-color="#ffffff"/><stop offset=".8" stop-color="#f8f8f8"/><stop offset="1" stop-color="#d8d8d8"/></linearGradient>
<radialGradient id="tGD" cx=".5" cy=".4" r=".6"><stop offset="0" stop-color="#8c8c8c"/><stop offset=".6" stop-color="#5e5e5e"/><stop offset="1" stop-color="#3c3c3c"/></radialGradient>
<radialGradient id="tRD" cx=".5" cy=".4" r=".6"><stop offset="0" stop-color="#e02828"/><stop offset=".7" stop-color="#b80c14"/><stop offset="1" stop-color="#90040c"/></radialGradient>
<radialGradient id="tInfo" cx=".35" cy=".2" r=".9"><stop offset="0" stop-color="#5c94ee"/><stop offset=".35" stop-color="#1c48a8"/><stop offset=".7" stop-color="#082470"/><stop offset="1" stop-color="#3060c0"/></radialGradient>
<linearGradient id="tGlass" x1="0" y1="0" x2="1" y2="0"><stop offset="0" stop-color="#bfe4fa"/><stop offset=".5" stop-color="#ffffff"/><stop offset="1" stop-color="#a8d8f6"/></linearGradient>
<linearGradient id="tBar" x1="0" y1="0" x2="0" y2="1"><stop offset="0" stop-color="#c4cede"/><stop offset="1" stop-color="#98a6bc"/></linearGradient>
<linearGradient id="tBlueCube" x1="0" y1="0" x2="1" y2="1"><stop offset="0" stop-color="#9cd4fc"/><stop offset=".5" stop-color="#3a94ec"/><stop offset="1" stop-color="#1060c8"/></linearGradient>
<linearGradient id="tArrFade" gradientUnits="objectBoundingBox" x1="0" y1="0" x2="1" y2="1"><stop offset="0" stop-color="#224488"/><stop offset="1" stop-color="#224488" stop-opacity="0"/></linearGradient>
</defs><path d="M20.800 14.600 Q21 13.600 22.200 13.500 L43.500 11.600 L45.600 8.600 Q46.200 7.800 47.400 7.700 L61.800 6.900 Q63.400 6.900 63.300 8.600 L59.600 52 L22 40 Z" fill="url(#tFoldB)"/>
<path d="M22 16 C34 12 50 16 60 26 L61 14 C50 10 36 10 22.500 14 Z" fill="#47c0f2" opacity=".3"/>
<path d="M11 27.200 L49.500 28.800 C53 29 55 31.500 56 34 C58 39 59.500 47 59.400 54.500 Q59.300 55.600 58 55.300 L19.500 48.300 Q18 48 17.600 46.600 L10.600 28.400 Q10.300 27.200 11 27.200 Z" fill="url(#tFoldF)"/>
<path d="M11 27.200 L49.500 28.800 C53 29 55 31.500 56 34" fill="none" stroke="#2a6a9a" stroke-width=".8"/>
<path d="M14 30 C24 28 36 34 44 44 L30 50 L19.500 48 Z" fill="#2a5068" opacity=".18"/>
<circle cx="98" cy="30.300" r="26" fill="url(#tGlobe)" stroke="#0a2a8a" stroke-width="1.200"/>
<path d="M77.500 21.500 C82 14 90 9.500 98 9 C108 9 117 14 121 23 L122.500 28 L120 27 L118.500 30 L116.500 28.500 L114 31 L112 36 L109 39 L106.500 41.500 L103 41.500 L101.500 37 L100.500 33 L98 29 L94.500 27.500 L91 25 L90.500 21.500 L93 18 L96 16.500 L92 16 L87 18.500 L82 22 L78 23 Z" fill="#e2e6f4"/>
<path d="M78 22.500 C82 16 88 12.500 94 11.500 C97 12 96 15 92 16 L87 18.500 L82 22 Z" fill="#a8adc4"/>
<path d="M73.200 27.800 L79 27.200 L83.500 29.500 L87 32.500 L84.500 35.500 L81.500 38 L80 42 L79 46 L76.500 42 L74 36 Z" fill="#b9c1e8"/>
<path d="M112.500 37.500 L116 35 L117.500 38 L121 34.500 L122.500 38 L120.500 42.500 L117 41 L114 42.500 Z" fill="#aab6e6"/>
<path d="M99.500 17.500 L103.500 19 L107 18 L105 20.500 L100.500 19.500 Z" fill="#9aa2c4" opacity=".7"/>
<ellipse cx="97.500" cy="17" rx="20" ry="11.500" fill="url(#tGlobeG)" opacity=".4"/>
<path d="M78 44 C86 56 110 56 118 44 C110 50 88 50 78 44 Z" fill="#7c94e0" opacity=".45"/>
<path d="M140.500 11.600 L170.500 11.600 L177.600 18.800 L177.600 48 Q177.600 49.500 176 49.500 L140.500 49.500 Q139.200 49.500 139.200 48 L139.200 13 Q139.200 11.600 140.500 11.600 Z" fill="url(#tSave)"/>
<rect x="147" y="13.300" width="21.700" height="10.400" fill="url(#tMetal)"/><rect x="159" y="14" width="5" height="9" fill="#3468c0"/>
<rect x="142" y="14.500" width="2" height="2.200" fill="#23458c"/>
<path d="M139.200 25 H177.600" stroke="#7ea2e2" stroke-width=".8"/>
<rect x="145.700" y="30.800" width="24.800" height="18.700" fill="url(#tLabel)"/>
<path d="M147.500 35.300 H168.700 M147.500 38.600 H168.700 M147.500 41.900 H168.700 M147.500 45.200 H168.700" stroke="#a8a8a8" stroke-width="1"/>
<path d="M207.200 29.800 L218 5.800 L222.800 12.800 C232 8.600 243 10.400 249.500 18 C256 26 256 40 248 48 C240 55 226 55 216.500 46 L224 40 C230 44.500 237 44 241 40 C245.500 35 245 26.500 240 22 C236.500 19 231 19 228 21 L233.500 27.600 Z" transform="translate(3.600 3)" fill="#8c8c8c"/>
<path d="M207.200 29.800 L218 5.800 L222.800 12.800 C232 8.600 243 10.400 249.500 18 C256 26 256 40 248 48 C240 55 226 55 216.500 46 L224 40 C230 44.500 237 44 241 40 C245.500 35 245 26.500 240 22 C236.500 19 231 19 228 21 L233.500 27.600 Z" fill="url(#tUndo)" stroke="#064c5e" stroke-width="1.200" stroke-linejoin="round"/>
<path d="M317.800 29.800 L304 5.800 L300.500 12.800 C291 8.600 280 10.400 273.500 18 C266.500 26 266.500 40 275 48 C283 55 297 55 306 46 L299 40 C293 44.500 286 44 282 40 C277.500 35 278 26.500 283 22 C286.500 19 291 19 294.500 21 L290 27.600 Z" transform="translate(3.600 3)" fill="#b4b4b4"/>
<path d="M317.800 29.800 L304 5.800 L300.500 12.800 C291 8.600 280 10.400 273.500 18 C266.500 26 266.500 40 275 48 C283 55 297 55 306 46 L299 40 C293 44.500 286 44 282 40 C277.500 35 278 26.500 283 22 C286.500 19 291 19 294.500 21 L290 27.600 Z" fill="url(#tRedo)" stroke="#8a8a8a" stroke-width="1.200" stroke-linejoin="round"/>
<path d="M375.300 42 L349 46.700" stroke="#7a3038" stroke-width="4.600"/><path d="M375.300 42 L349 46.700" stroke="#f05a68" stroke-width="3.300"/>
<path d="M338.600 48.800 L351.600 42.600 L352.800 51.600 Z" fill="#f05a68" stroke="#8a3038" stroke-width=".7"/>
<path d="M375.500 42 L389 54" stroke="#2c5a4c" stroke-width="4.400"/><path d="M375.500 42 L389 54" stroke="#5cc49c" stroke-width="2.800"/>
<path d="M392.600 57 L383.800 55.300 L390.300 48.600 Z" fill="#66d8ac" stroke="#2c6a56" stroke-width=".7"/>
<rect x="374" y="15" width="5.200" height="26.500" fill="#2424ee" stroke="#1a1a90" stroke-width=".6"/>
<path d="M376.400 4.600 L381.400 16.700 L371.500 16.700 Z" fill="#3030ff" stroke="#1a1a90" stroke-width=".6"/><path d="M375.200 12 L376.500 16 L374.400 16 Z" fill="#b0b0ff"/>
<circle cx="375.800" cy="42" r="2.300" fill="#8c8c8c"/>
<rect x="340.5" y="17.8" width="29.600000000000023" height="6.199999999999999" fill="url(#tPlusH)"/><rect x="352" y="6" width="7" height="29.700000000000003" fill="url(#tPlus)"/>
<ellipse cx="420.500" cy="42.500" rx="18.300" ry="15.500" transform="rotate(-12 420.500 42.500)" fill="#8c8c8c"/>
<ellipse cx="419.600" cy="40.300" rx="18.300" ry="16" transform="rotate(-12 419.600 40.300)" fill="#e00808"/>
<ellipse cx="420.500" cy="39" rx="13.600" ry="11.800" transform="rotate(-12 420.500 39)" fill="#f2f2f2"/>
<ellipse cx="421.200" cy="38" rx="9.800" ry="8.400" transform="rotate(-12 421.200 38)" fill="#d80404"/>
<ellipse cx="421.800" cy="37" rx="6.200" ry="5.200" transform="rotate(-12 421.800 37)" fill="#f4f4f4"/>
<ellipse cx="422.200" cy="36.200" rx="3" ry="2.500" fill="#cc0404"/>
<path d="M423 36 L436 42" stroke="#555" stroke-width="1.500" opacity=".35"/>
<path d="M422.400 36 L427.500 31" stroke="#222" stroke-width="1.600"/><path d="M426 32.500 L430 28.600" stroke="#111" stroke-width="2.600"/>
<path d="M430 28.600 L444 14.600" stroke="#a4c41c" stroke-width="2.200"/>
<ellipse cx="448.600" cy="9.800" rx="8" ry="3.900" transform="rotate(-45 448.600 9.800)" fill="#8aa408"/><path d="M443 15.400 L454 4.200" stroke="#dce860" stroke-width="1"/>
<rect x="401.7" y="17.8" width="29.5" height="6.199999999999999" fill="url(#tPlusH)"/><rect x="413.1" y="6" width="6.699999999999989" height="29.700000000000003" fill="url(#tPlus)"/>
<rect x="477.500" y="8.400" width="46" height="47.400" rx="3.500" fill="#000" opacity=".12"/>
<rect x="476.500" y="6.400" width="47.800" height="48" rx="3.500" fill="url(#tFit)" stroke="#98988e" stroke-width="1.200"/>
<rect x="477.700" y="7.600" width="45.400" height="45.600" rx="2.600" fill="none" stroke="#fff" stroke-width="1"/>
<g transform="translate(480 9.8) scale(1 1)"><path d="M0 0 L14 0 L0 14 Z" fill="#224488"/><path d="M4.500 9.500 L9.500 4.500 L16.500 11.500 L11.500 16.500 Z" fill="url(#tArrFade)"/></g>
<g transform="translate(520.6 9.8) scale(-1 1)"><path d="M0 0 L14 0 L0 14 Z" fill="#224488"/><path d="M4.500 9.500 L9.500 4.500 L16.500 11.500 L11.500 16.500 Z" fill="url(#tArrFade)"/></g>
<g transform="translate(480 51) scale(1 -1)"><path d="M0 0 L14 0 L0 14 Z" fill="#224488"/><path d="M4.500 9.500 L9.500 4.500 L16.500 11.500 L11.500 16.500 Z" fill="url(#tArrFade)"/></g>
<g transform="translate(520.6 51) scale(-1 -1)"><path d="M0 0 L14 0 L0 14 Z" fill="#224488"/><path d="M4.500 9.500 L9.500 4.500 L16.500 11.500 L11.500 16.500 Z" fill="url(#tArrFade)"/></g>
<path d="M537.500 20 L556.700 5.300 L583.400 9.400 L568.300 25.400 Z" fill="url(#tCubeT)" stroke="#04566a" stroke-width="1.400" stroke-linejoin="round"/>
<path d="M537.500 20 L568.300 25.400 L568.300 56.600 L538.400 47.700 Z" fill="url(#tCubeF)" stroke="#04566a" stroke-width="1.400" stroke-linejoin="round"/>
<path d="M568.300 25.400 L583.400 9.400 L583 37 L568.300 56.600 Z" fill="#048ca6" stroke="#04566a" stroke-width="1.400" stroke-linejoin="round"/><path d="M615.1 7.0 L615.1 46.5 L625.6 37.6 L632.6 54.1 L637.0 52.2 L630.0 36.9 L644.0 36.9 Z" fill="none" stroke="#000" stroke-width="1.450" stroke-linejoin="miter"/>
<path d="M643.200 15.900 L652.300 24.900 M652.300 15.900 L643.200 24.900" stroke="#d45a5a" stroke-width="3.300" stroke-linecap="round"/>
<path d="M675.0 5.7 L675.0 45.2 L685.5 36.3 L692.5 52.8 L696.9 50.9 L689.9 35.6 L703.9 35.6 Z" fill="none" stroke="#000" stroke-width="1.450" stroke-linejoin="miter"/>
<path d="M712.800 38 L712.800 25" stroke="#2222f0" stroke-width="2.400"/><path d="M712.800 20.500 L715.200 26.500 L710.400 26.500 Z" fill="#3434ff"/>
<path d="M712.800 38.200 L699 41.200" stroke="#ee4a58" stroke-width="2.400"/><path d="M695 42 L700.500 39 L701.400 43.200 Z" fill="#ee4a58"/>
<path d="M712.800 38.200 L718.500 43" stroke="#48b088" stroke-width="2"/><circle cx="719.500" cy="44" r="2.400" fill="#5cd0a0"/>
<path d="M704.0999999999999 48.1 H712.5 M708.3 43.9 V52.300000000000004" stroke="#000" stroke-width="1.300"/><path d="M714.5 48.1 L711.6999999999999 50.5 L711.6999999999999 45.7 Z" fill="#000"/><path d="M702.0999999999999 48.1 L704.9 45.7 L704.9 50.5 Z" fill="#000"/><path d="M708.3 54.300000000000004 L705.9 51.5 L710.6999999999999 51.5 Z" fill="#000"/><path d="M708.3 41.9 L710.6999999999999 44.7 L705.9 44.7 Z" fill="#000"/>
<path d="M735.7 5.7 L735.7 45.2 L746.2 36.3 L753.2 52.8 L757.6 50.9 L750.6 35.6 L764.6 35.6 Z" fill="none" stroke="#000" stroke-width="1.450" stroke-linejoin="miter"/>
<path d="M762.600 29.500 L772 23.500 L780.800 26.500 L780.600 37.500 L771.500 43.300 L762.800 40.500 Z" fill="url(#tBlueCube)"/>
<path d="M762.600 29.500 L772 23.500 L780.800 26.500 L771.600 32.300 Z" fill="#b4e0fe"/>
<path d="M771.600 32.300 L780.800 26.500 L780.600 37.500 L771.500 43.300 Z" fill="#1a6cd4"/>
<path d="M762.600 29.500 L771.600 32.300 L771.500 43.300 L762.800 40.500 Z" fill="#3a94ec"/>
<path d="M765.1999999999999 48.4 H773.6 M769.4 44.199999999999996 V52.6" stroke="#000" stroke-width="1.300"/><path d="M775.6 48.4 L772.8 50.8 L772.8 46.0 Z" fill="#000"/><path d="M763.1999999999999 48.4 L766.0 46.0 L766.0 50.8 Z" fill="#000"/><path d="M769.4 54.6 L767.0 51.8 L771.8 51.8 Z" fill="#000"/><path d="M769.4 42.199999999999996 L771.8 45.0 L767.0 45.0 Z" fill="#000"/>
<circle cx="828.500" cy="30.200" r="23.400" fill="url(#tRad)" stroke="#000" stroke-width="1.500"/>
<path d="M828.5 30.2 L818.2 12.4 A20.5 20.5 0 0 1 838.8 12.4 Z" fill="#d6ba22"/>
<path d="M828.5 30.2 L849.0 30.2 A20.5 20.5 0 0 1 838.8 48.0 Z" fill="#d6ba22"/>
<path d="M828.5 30.2 L818.2 48.0 A20.5 20.5 0 0 1 808.0 30.2 Z" fill="#d6ba22"/>
<circle cx="828.5" cy="30.2" r="6" fill="#1a1a1a"/><circle cx="828.5" cy="30.2" r="3.600" fill="#050505" stroke="#555" stroke-width=".7"/>
<path d="M828.500 7 A23.400 23.400 0 0 1 851.500 26 C846 22 838 14 828.500 7 Z" fill="#fff" opacity=".12"/>
<path d="M836 31.500 L843 38.300 L850 31.500 L855 36.500 L848.100 43.500 L855 50.500 L850 55.600 L843 48.700 L836 55.600 L831 50.500 L837.900 43.500 L831 36.500 Z" fill="url(#tRX)" stroke="#9a0c06" stroke-width=".8" stroke-linejoin="round"/>
<path d="M836 31.500 L843 38.300 L850 31.500 L855 36.500 L851 40.600 C845 41.500 838 43 833.500 39 L831 36.500 Z" fill="#fff" opacity=".14"/>
<ellipse cx="904.500" cy="46.800" rx="12" ry="1.600" fill="#000" opacity=".16"/>
<path d="M894.200 20 L915.700 34 L894.200 46.600 Z" fill="url(#tPlay)" stroke="#1f7ed2" stroke-width="1.300" stroke-linejoin="round"/>
<ellipse cx="962.500" cy="43.200" rx="13" ry="1.400" fill="#000" opacity=".14"/>
<rect x="952.200" y="18.200" width="7.700" height="24.400" rx=".8" fill="url(#tPause)" stroke="#2a90e4" stroke-width="1.100"/>
<rect x="965" y="18.200" width="7.700" height="24.400" rx=".8" fill="url(#tPause)" stroke="#2a90e4" stroke-width="1.100"/>
<path d="M1024.42 12.84 Q1024.42 7.20 1031.00 7.20 L1040.40 7.20 Q1046.98 7.20 1046.98 12.84 L1046.98 24.59 Q1046.98 30.70 1040.87 30.70 L1030.53 30.70 Q1024.42 30.70 1024.42 36.81 L1024.42 41.98 L1018.31 41.98 Q1012.20 41.98 1012.20 35.40 L1012.20 26.00 Q1012.20 19.42 1018.31 19.42 L1035.70 19.42 L1035.70 17.78 L1024.42 17.78 Z" fill="url(#tPyB)" stroke="#1e4a78" stroke-width="1.100" stroke-linejoin="round"/>
<path d="M1024.42 12.84 Q1024.42 7.20 1031.00 7.20 L1040.40 7.20 Q1046.98 7.20 1046.98 12.84 L1046.98 24.59 Q1046.98 30.70 1040.87 30.70 L1030.53 30.70 Q1024.42 30.70 1024.42 36.81 L1024.42 41.98 L1018.31 41.98 Q1012.20 41.98 1012.20 35.40 L1012.20 26.00 Q1012.20 19.42 1018.31 19.42 L1035.70 19.42 L1035.70 17.78 L1024.42 17.78 Z" transform="rotate(180 1035.700 30.800)" fill="url(#tPyY)" stroke="#c49400" stroke-width="1.100" stroke-linejoin="round"/>
<path d="M1013.500 30 C1016 24 1026 22 1032 24 L1032 20 L1014 20 Z" fill="#fff" opacity=".12"/>
<circle cx="1030" cy="12.800" r="1.900" fill="#fff"/><circle cx="1041.500" cy="48.900" r="1.900" fill="#fff"/>
<rect x="1010.8" y="17.7" width="29.100000000000136" height="6.199999999999999" fill="url(#tPlusH)"/><rect x="1022.2" y="6.2" width="6.7000000000000455" height="29.599999999999998" fill="url(#tPlus)"/>
<path d="M1083.500 4.800 L1111.200 4.800 L1124.400 18 L1124.400 55 Q1124.400 57 1122.400 57 L1083.500 57 Q1081.600 57 1081.600 55 L1081.600 6.800 Q1081.600 4.800 1083.500 4.800 Z" fill="url(#tDoc)"/>
<path d="M1111.200 4.800 L1124.400 18 L1124.400 55 Q1124.400 57 1122.400 57" fill="none" stroke="#7c7c7c" stroke-width="1"/>
<path d="M1111.200 4.800 L1083.500 4.800 Q1081.600 4.800 1081.600 6.800 L1081.600 55 Q1081.600 57 1083.500 57 L1122.400 57" fill="none" stroke="#1c1c1c" stroke-width="1.500"/>
<rect x="1084.300" y="7.200" width="26.700" height="5.200" fill="url(#tPurp)"/>
<path d="M1111.200 4.800 L1111.200 16 Q1111.200 18 1113.200 18 L1124.400 18 Z" fill="#ececec" stroke="#a0a0a0" stroke-width=".6"/>
<path d="M1112 18.500 L1124 18.500 L1124 24 Z" fill="#000" opacity=".15"/>
<rect x="1096.700" y="20" width="20.500" height="2" fill="#9e9e9e"/>
<rect x="1096.700" y="24.6" width="20.500" height="2" fill="#9e9e9e"/>
<rect x="1096.700" y="29.4" width="20.500" height="2" fill="#9e9e9e"/>
<rect x="1096.700" y="33.9" width="20.500" height="2" fill="#9e9e9e"/>
<rect x="1096.700" y="38.3" width="20.500" height="2" fill="#9e9e9e"/>
<rect x="1096.700" y="42.9" width="20.500" height="2" fill="#9e9e9e"/>
<rect x="1096.700" y="47.5" width="20.500" height="2" fill="#9e9e9e"/>
<rect x="1089" y="38.099999999999994" width="2.800" height="2.400" fill="#9a9a9a"/>
<rect x="1089" y="42.699999999999996" width="2.800" height="2.400" fill="#9a9a9a"/>
<rect x="1089" y="47.3" width="2.800" height="2.400" fill="#9a9a9a"/>
<rect x="1077.6" y="17.7" width="29.300000000000182" height="6.199999999999999" fill="url(#tPlusH)"/><rect x="1089" y="6.2" width="6.7000000000000455" height="29.599999999999998" fill="url(#tPlus)"/>
<path d="M1152.500 38 C1158 27 1168 28.500 1175 31 C1180 32.500 1184 31 1186.500 28" fill="none" stroke="#2e2c00" stroke-width="7.6" stroke-linecap="butt" transform="translate(0 .8)"/><path d="M1152.500 38 C1158 27 1168 28.500 1175 31 C1180 32.500 1184 31 1186.500 28" fill="none" stroke="#a8a000" stroke-width="5.6" stroke-linecap="butt"/>
<path d="M1177.600 27.400 L1190 22.800 L1188.600 35.200 L1185 31.500 Z" fill="#a8a000" stroke="#2e2c00" stroke-width="1" stroke-linejoin="round"/>
<ellipse cx="1153.2" cy="44.7" rx="9.5" ry="7.6" fill="#1c1c1c"/><ellipse cx="1153.2" cy="43.5" rx="9.5" ry="7.6" fill="url(#tGD)" stroke="#1c1c1c" stroke-width="1"/><ellipse cx="1153.2" cy="42.7" rx="3.4" ry="2.500" fill="#f2f0e6"/>
<ellipse cx="1188.2" cy="20.1" rx="7.6" ry="5.3" fill="#3a0204"/><ellipse cx="1188.2" cy="19.1" rx="7.6" ry="5.3" fill="url(#tRD)" stroke="#50060a" stroke-width=".8"/><ellipse cx="1188.2" cy="18.6" rx="2.800" ry="1.900" fill="#fbf4ee"/>
<path d="M1219 38.500 L1240 25.200" fill="none" stroke="#2e2c00" stroke-width="7.6" stroke-linecap="butt" transform="translate(0 .8)"/><path d="M1219 38.500 L1240 25.200" fill="none" stroke="#a8a000" stroke-width="5.6" stroke-linecap="butt"/>
<path d="M1228 24 L1246.500 19.500 L1239.800 34.300 L1237.400 29.800 Z" fill="#a8a000" stroke="#2e2c00" stroke-width="1" stroke-linejoin="round"/>
<ellipse cx="1214.6" cy="43.6" rx="9.5" ry="7.6" fill="#1c1c1c"/><ellipse cx="1214.6" cy="42.4" rx="9.5" ry="7.6" fill="url(#tGD)" stroke="#1c1c1c" stroke-width="1"/><ellipse cx="1214.6" cy="41.6" rx="3.4" ry="2.500" fill="#f2f0e6"/>
<ellipse cx="1249.2" cy="19.2" rx="7.6" ry="5.3" fill="#3a0204"/><ellipse cx="1249.2" cy="18.2" rx="7.6" ry="5.3" fill="url(#tRD)" stroke="#50060a" stroke-width=".8"/><ellipse cx="1249.2" cy="17.7" rx="2.800" ry="1.900" fill="#fbf4ee"/>
<path d="M1273 41 C1271 35 1272 31 1274 28" fill="none" stroke="#2e2c00" stroke-width="8.4" stroke-linecap="butt" transform="translate(0 .8)"/><path d="M1273 41 C1271 35 1272 31 1274 28" fill="none" stroke="#a8a000" stroke-width="6.4" stroke-linecap="butt"/>
<path d="M1280 21.500 C1288 17.800 1294 17 1300 17.800" fill="none" stroke="#2e2c00" stroke-width="7.6" stroke-linecap="butt" transform="translate(0 .8)"/><path d="M1280 21.500 C1288 17.800 1294 17 1300 17.800" fill="none" stroke="#a8a000" stroke-width="5.6" stroke-linecap="butt"/>
<path d="M1290.500 12.600 L1305.500 17.800 L1292.500 23.600 L1293.200 18.600 Z" fill="#a8a000" stroke="#2e2c00" stroke-width="1" stroke-linejoin="round"/>
<ellipse cx="1276.3" cy="47.2" rx="10" ry="8.2" fill="#1c1c1c"/><ellipse cx="1276.3" cy="46" rx="10" ry="8.2" fill="url(#tGD)" stroke="#1c1c1c" stroke-width="1"/><ellipse cx="1276.3" cy="45.2" rx="3.4" ry="2.500" fill="#f2f0e6"/>
<ellipse cx="1275.7" cy="25.8" rx="7.8" ry="5.7" fill="#3a0204"/><ellipse cx="1275.7" cy="24.8" rx="7.8" ry="5.7" fill="url(#tRD)" stroke="#50060a" stroke-width=".8"/><ellipse cx="1275.7" cy="24.3" rx="2.800" ry="1.900" fill="#fbf4ee"/>
<ellipse cx="1310.7" cy="21.8" rx="7.4" ry="5.3" fill="#3a0204"/><ellipse cx="1310.7" cy="20.8" rx="7.4" ry="5.3" fill="url(#tRD)" stroke="#50060a" stroke-width=".8"/><ellipse cx="1310.7" cy="20.3" rx="2.800" ry="1.900" fill="#fbf4ee"/>
<path d="M1342.300 13 L1363.400 13 C1363.400 22 1356 27 1354.500 31.200 C1356 35.500 1363.400 40 1363.400 49 L1342.300 49 C1342.300 40 1349.500 35.500 1351 31.200 C1349.500 27 1342.300 22 1342.300 13 Z" fill="url(#tGlass)" stroke="#5a9ad0" stroke-width=".8"/>
<path d="M1343.500 20.500 L1362.300 20.500 C1360 25 1355 27.500 1353.800 30.500 L1352 30.500 C1350.800 27.500 1346 25 1343.500 20.500 Z" fill="#1c90e6"/>
<path d="M1343 48.500 C1344 45 1348 42.800 1352.900 42 C1358 42.800 1362 45 1362.800 48.500 Z" fill="#08a8f4"/>
<path d="M1352.900 31 L1352.900 42" stroke="#3aa8f0" stroke-width="1"/>
<rect x="1340" y="7" width="25.700" height="6.400" rx="2.200" fill="#111"/><rect x="1340" y="48.500" width="25.700" height="6.400" rx="2.200" fill="#111"/>
<rect x="1343" y="8.200" width="19.500" height="1.600" rx=".8" fill="#666" opacity=".7"/><rect x="1343" y="49.800" width="19.500" height="1.600" rx=".8" fill="#666" opacity=".7"/>
<circle cx="1414.300" cy="30.600" r="26" fill="url(#tInfo)" stroke="#3a7ae0" stroke-width="1"/>
<path d="M1389.500 38 C1396 26 1412 22 1439.500 27 A26 26 0 0 0 1389.500 38 Z" fill="#fff" opacity=".1"/>
<circle cx="1414.300" cy="17.600" r="3.500" fill="#fff"/><rect x="1410.900" y="24.300" width="6.600" height="20.400" fill="#fff"/>
<rect x="1452" y="8.3" width="29.5" height="6.4" rx="3" fill="url(#tBar)" stroke="#4c4c4c" stroke-width="1.100"/>
<rect x="1472.4" y="15.5" width="29.5" height="6.3" rx="3" fill="url(#tBar)" stroke="#4c4c4c" stroke-width="1.100"/>
<rect x="1472.4" y="23.4" width="29.5" height="6.3" rx="3" fill="url(#tBar)" stroke="#4c4c4c" stroke-width="1.100"/>
<rect x="1472.4" y="31.4" width="29.5" height="6.3" rx="3" fill="url(#tBar)" stroke="#4c4c4c" stroke-width="1.100"/>
<rect x="1452" y="39.3" width="29.5" height="6.3" rx="3" fill="url(#tBar)" stroke="#4c4c4c" stroke-width="1.100"/>
<rect x="1452" y="47.4" width="29.5" height="6.3" rx="3" fill="url(#tBar)" stroke="#4c4c4c" stroke-width="1.100"/>
<path d="M1467 17.400 L1474 22.600 L1467.200 28.600 Z" fill="#6a6048"/>
<path d="M1460.800 15 C1460.600 21 1463.500 23.300 1468.500 23.100" fill="none" stroke="#6a6048" stroke-width="5.400"/>
<path d="M1460.800 15 C1460.600 21 1463.500 23.300 1468.500 23.100" fill="none" stroke="#fdf0c4" stroke-width="3.800"/>
<path d="M1467.300 18.600 L1473 22.700 L1467.400 27.400 Z" fill="#fbe6a4"/>
<path d="M1519.300 16.600 L1526.700 16.600 Q1527.600 16.600 1527.600 17.500 L1527.600 18.600 Q1527.600 19.400 1526.600 19.500 L1525.800 19.700 L1525.800 42.500 L1526.600 42.700 Q1527.600 42.800 1527.600 43.600 L1527.600 44.700 Q1527.600 45.600 1526.700 45.600 L1519.300 45.600 Q1518.400 45.600 1518.400 44.700 L1518.400 43.600 Q1518.400 42.800 1519.400 42.700 L1520.200 42.500 L1520.200 19.700 L1519.400 19.500 Q1518.400 19.400 1518.400 18.600 L1518.400 17.500 Q1518.400 16.600 1519.300 16.600 Z" fill="#fff" stroke="#5e5e5e" stroke-width="1.500" stroke-linejoin="round"/>
<path fill-rule="evenodd" d="M1541.600 16 C1549.300 16 1554.900 22.400 1554.900 31.200 C1554.900 40 1549.300 46.400 1541.600 46.400 C1533.900 46.400 1528.400 40 1528.400 31.200 C1528.400 22.400 1533.900 16 1541.600 16 Z M1541.300 23.200 C1537.300 23.200 1534.300 26.600 1534.300 31.100 C1534.300 35.600 1537.300 38.900 1541.300 38.900 C1545.300 38.900 1548.200 35.600 1548.200 31.100 C1548.200 26.600 1545.300 23.200 1541.300 23.200 Z" fill="#fff" stroke="#5e5e5e" stroke-width="1.500"/></svg>
<div class="abs" style="left:311px;top:275px;width:276px;height:300.500px;background:#f0f0f0;border:1px solid #2274c8;box-shadow:0 0 10px rgba(0,0,0,.35)">
<div class="abs" style="left:0;top:0;width:273.500px;height:30px;background:#fff"></div>
</div>
<svg class="ic" style="left:320px;top:281.900px" width="16" height="16" viewBox="0 0 16 16"><circle cx="8" cy="8" r="7.900" fill="#b9c9d9"/><circle cx="8" cy="8" r="6.100" fill="#0c3258"/><path d="M4.300 11.700 L8.900 11.700 L7.600 7.200 Z" fill="#dfe6ee"/><path d="M5.900 9.200 L9.200 4.500 L12.500 8.600" fill="none" stroke="#fff" stroke-width="1.300" stroke-linejoin="round"/></svg>
<div class="abs" style="left:340.800px;top:283px;font-size:12px;line-height:16px;color:#000;white-space:pre;transform-origin:0 50%;transform:scaleX(1.020)">Add function call or custom code</div>
<svg class="ic" style="left:565px;top:284.500px" width="12" height="12" viewBox="0 0 12 12"><path d="M0.700 0.700 L11.300 11.300 M11.300 0.700 L0.700 11.300" stroke="#1a1a1a" stroke-width="1.100"/></svg>
<div class="abs" style="left:323px;top:318px;width:103px;height:20px;background:#e1e1e1;border:1px solid #adadad"></div>
<div class="abs" style="left:325.800px;top:322px;font-size:11px;line-height:14px;color:#000;white-space:pre;transform-origin:0 50%;transform:scaleX(.935)">Program Call</div>
<svg class="ic" style="left:412.500px;top:325.500px" width="8" height="5" viewBox="0 0 8 5"><path d="M0 0 L7.600 0 L3.800 4.200 Z" fill="#000"/></svg>
<div class="abs" style="left:496px;top:318px;width:78px;height:21px;background:#e1e1e1;border:1px solid #adadad"></div>
<div class="abs" style="left:498px;top:322.300px;font-size:11px;line-height:14px;color:#000;white-space:pre;transform-origin:0 50%;transform:scaleX(.965)">Select program</div>
<div class="abs" style="left:323px;top:346px;width:252px;height:189px;background:#fff;border:1px solid #7a7a7a"></div>
<div class="abs" style="left:328px;top:352.900px;font-family:'Liberation Mono',monospace;font-size:10px;line-height:12px;color:#000;white-space:pre">ApproachMove</div>
<div class="abs" style="left:420px;top:542px;width:72.500px;height:21px;background:#e1e1e1;border:2px solid #0078d7"></div>
<div class="abs" style="left:447.500px;top:546px;font-size:11px;line-height:14px;color:#000;white-space:pre">OK</div>
<div class="abs" style="left:501px;top:542px;width:73px;height:21px;background:#e1e1e1;border:1px solid #adadad"></div>
<div class="abs" style="left:520.500px;top:546px;font-size:11px;line-height:14px;color:#000;white-space:pre">Cancel</div>
<svg class="ic" style="left:4px;top:105px;filter:drop-shadow(0 1px 3px rgba(0,0,0,.55))" width="223" height="52" viewBox="4 105 223 52"><rect x="15.35" y="116.35" width="200.3" height="29.3" fill="none" stroke="#fb4143" stroke-width="2.7"/></svg>
<svg class="ic" style="left:6px;top:630px;filter:drop-shadow(0 1px 3px rgba(0,0,0,.55))" width="340" height="126" viewBox="6 630 340 126"><rect x="17.35" y="641.5500000000001" width="317.3" height="102.8999999999999" fill="none" stroke="#fb4143" stroke-width="2.7"/></svg>
<svg class="ic" style="left:301px;top:332px;filter:drop-shadow(0 1px 4px rgba(0,0,0,.55))" width="131" height="50" viewBox="301 332 131 50"><rect x="312.85" y="343.75" width="107.8" height="26.500000000000046" fill="none" stroke="#fb4143" stroke-width="2.7"/></svg>
<svg class="ic" style="left:270px;top:540px;filter:drop-shadow(0 2px 2px rgba(0,0,0,.4))" width="100" height="160" viewBox="270 540 100 160"><path d="M296.500 677 L324.500 588" stroke="#fb4143" stroke-width="9" stroke-linecap="round"/><path d="M334.500 556.700 L312 579.500 L340.200 588.800 Z" fill="#fb4143"/></svg>
<div class="abs" style="left:467.20000000000005px;top:544.0px;width:21.8px;height:21.8px;border-radius:50%;background:#fb4143;box-shadow:0 2px 5px rgba(0,0,0,.35)"></div>
<svg class="ic" style="left:478px;top:555.2px" width="15.400000000000002" height="22.0" viewBox="-1 -1 14 20"><path d="M0 0 L0 15.500 L3.600 12.200 L6.200 18 L8.600 17 L6 11.400 L10.800 11.400 Z" fill="#fff" stroke="#000" stroke-width="1" stroke-linejoin="miter"/></svg>
<div class="abs" style="left:1108.06px;top:46.05px;width:22px;height:22px;border-radius:50%;background:#fb4143;box-shadow:0 2px 5px rgba(0,0,0,.35)"></div>
<svg class="ic" style="left:1118.1px;top:57.2px" width="15.400000000000002" height="22.0" viewBox="-1 -1 14 20"><path d="M0 0 L0 15.500 L3.600 12.200 L6.200 18 L8.600 17 L6 11.400 L10.800 11.400 Z" fill="#fff" stroke="#000" stroke-width="1" stroke-linejoin="miter"/></svg>
<div class="abs" style="left:1482.26px;top:44.25px;width:21.6px;height:21.6px;border-radius:50%;background:#fb4143;box-shadow:0 2px 5px rgba(0,0,0,.35)"></div>
<svg class="ic" style="left:1492.2px;top:54.8px" width="15.400000000000002" height="22.0" viewBox="-1 -1 14 20"><path d="M0 0 L0 15.500 L3.600 12.200 L6.200 18 L8.600 17 L6 11.400 L10.800 11.400 Z" fill="#fff" stroke="#000" stroke-width="1" stroke-linejoin="miter"/></svg>
</body></html>
